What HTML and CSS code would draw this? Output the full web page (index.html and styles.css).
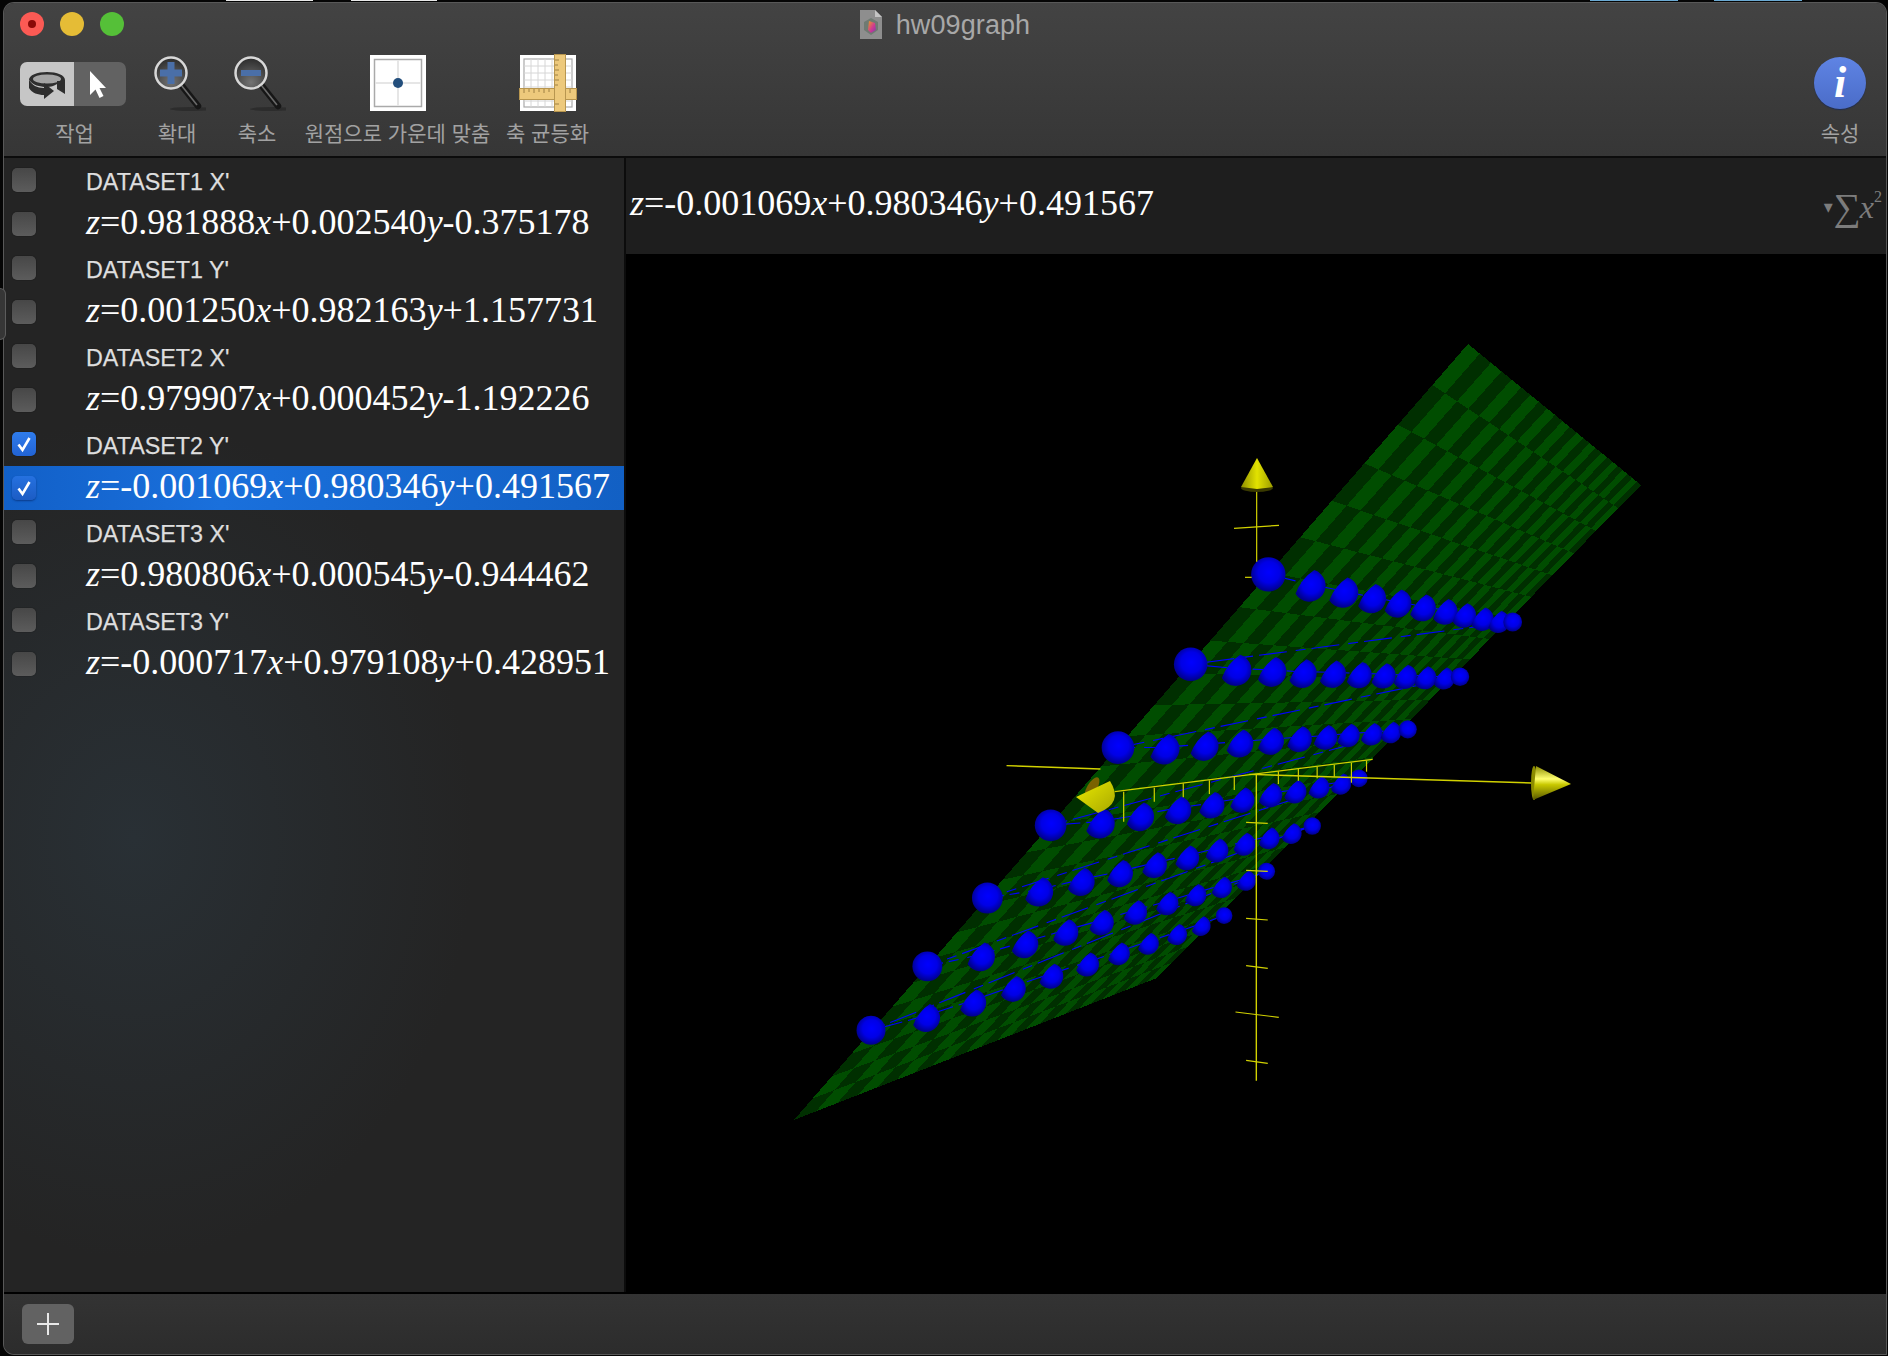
FILE: index.html
```html
<!DOCTYPE html>
<html lang="ko">
<head>
<meta charset="utf-8">
<title>hw09graph</title>
<link rel="stylesheet" href="styles.css">
</head>
<body>
<div class="behind behind-a"></div>
<div class="behind behind-b"></div>
<div class="behind behind-c"></div>
<div class="behind behind-d"></div>
<div class="tab-edge"></div>
<div class="window">
  <header class="toolbar">
    <div class="titlebar">
      <div class="lights">
        <span class="light red"><span class="red-dot"></span></span>
        <span class="light yellow"></span>
        <span class="light green"></span>
      </div>
      <div class="title">
        <svg class="doc-icon" viewBox="0 0 22 29" width="22" height="29">
          <defs>
            <linearGradient id="docfill" x1="0" y1="0" x2="1" y2="1">
              <stop offset="0" stop-color="#e8a020"/><stop offset=".55" stop-color="#d03a90"/><stop offset="1" stop-color="#7a3ab0"/>
            </linearGradient>
          </defs>
          <path d="M0 0H15L22 7V29H0Z" fill="#8e8e8e"/>
          <path d="M15 0L22 7H15Z" fill="#c4c4c4"/>
          <path d="M4 12L11 8L18 12V20L11 25L4 20Z" fill="#6f7a72"/>
          <path d="M9 11L15 13L16 20L11 23L8 20Z" fill="url(#docfill)"/>
        </svg>
        <span class="title-text">hw09graph</span>
      </div>
      <div></div>
    </div>
    <div class="tools">
      <div class="tool tool-action">
        <div class="tool-icon">
          <div class="segment">
            <div class="seg seg-on">
              <svg viewBox="0 0 54 44" width="54" height="44">
                <path d="M9 18C9 13 17 10 27 10S45 13 45 18V32L37 27V22C34 24 31 25 27 25 19 25 13 23 9 18Z" fill="#2e2e2e"/>
                <ellipse cx="27" cy="17" rx="14" ry="4.500" fill="#a4a4a4"/>
                <path d="M9 18V26C12 31 18 33 24 33V26C17 26 12 23 9 18Z" fill="#2e2e2e"/>
                <path d="M24 26V21L34 29L24 37V33Z" fill="#2e2e2e"/>
                <path d="M37 25L45 20V19H37Z" fill="#2e2e2e"/>
              </svg>
            </div>
            <div class="seg seg-off">
              <svg viewBox="0 0 52 44" width="52" height="44">
                <path d="M16 9V33L21.500 27.500L25.500 36L29.500 34L25.500 26H32Z" fill="#fff"/>
              </svg>
            </div>
          </div>
        </div>
        <span class="tool-label tool-label-action">작업</span>
      </div>
      <div class="tool tool-zoomin">
        <div class="tool-icon">
          <svg viewBox="0 0 58 58" width="58" height="58">
            <defs>
              <radialGradient id="lens" cx=".5" cy=".8" r=".8">
                <stop offset="0" stop-color="#747474"/><stop offset="1" stop-color="#2a2a2a"/>
              </radialGradient>
            </defs>
            <ellipse cx="44" cy="55" rx="22" ry="2" fill="#2c2c2c"/>
            <path d="M34 32L50 52" stroke="#161616" stroke-width="6.500" stroke-linecap="round"/>
            <path d="M33.500 31.500L49 51" stroke="#6a6a6a" stroke-width="1.600"/>
            <circle cx="23" cy="19" r="15.500" fill="url(#lens)" stroke="#d8d8d8" stroke-width="2.500"/>
            <path d="M12 19H34M23 8V30" stroke="#4a6fa8" stroke-width="7"/>
          </svg>
        </div>
        <span class="tool-label">확대</span>
      </div>
      <div class="tool tool-zoomout">
        <div class="tool-icon">
          <svg viewBox="0 0 58 58" width="58" height="58">
            <ellipse cx="44" cy="55" rx="22" ry="2" fill="#2c2c2c"/>
            <path d="M34 32L50 52" stroke="#161616" stroke-width="6.500" stroke-linecap="round"/>
            <path d="M33.500 31.500L49 51" stroke="#6a6a6a" stroke-width="1.600"/>
            <circle cx="23" cy="19" r="15.500" fill="url(#lens)" stroke="#d8d8d8" stroke-width="2.500"/>
            <path d="M13 19H33" stroke="#4a6fa8" stroke-width="6"/>
          </svg>
        </div>
        <span class="tool-label">축소</span>
      </div>
      <div class="tool tool-center">
        <div class="tool-icon">
          <svg viewBox="0 0 56 56" width="56" height="56">
            <rect width="56" height="56" fill="#fff"/>
            <rect x="4.500" y="4.500" width="47" height="47" fill="none" stroke="#aaa" stroke-width="1.500"/>
            <path d="M28 5V51M5 28H51" stroke="#e6e6e6" stroke-width="2"/>
            <circle cx="28" cy="28" r="5" fill="#234e7c"/>
          </svg>
        </div>
        <span class="tool-label">원점으로 가운데 맞춤</span>
      </div>
      <div class="tool tool-scale">
        <div class="tool-icon">
          <svg viewBox="0 0 58 58" width="58" height="58">
            <rect x="1" y="1" width="56" height="56" fill="#fff"/>
            <rect x="5" y="5" width="48" height="48" fill="none" stroke="#aaa" stroke-width="1.200"/>
            <path d="M12 5V53M19 5V53M26 5V53M33 5V53M5 12H53M5 19H53M5 26H53M5 33H53M5 47H53" stroke="#d6d6d6" stroke-width="1"/>
            <rect x="0.500" y="34.500" width="57" height="11" fill="#edc97c" stroke="#b8964f"/>
            <rect x="35.500" y="0.500" width="11" height="57" fill="#edc97c" stroke="#b8964f"/>
            <path d="M5 35V39M10 35V38M15 35V39M20 35V38M25 35V39M30 35V38M51 35V39M36 6H40M36 11H39M36 16H40M36 21H39M36 26H40M36 31H39M36 50H40" stroke="#8a6f35" stroke-width="0.800"/>
          </svg>
        </div>
        <span class="tool-label">축 균등화</span>
      </div>
      <div class="tool tool-info">
        <div class="tool-icon">
          <div class="info-badge"><span class="info-i">i</span></div>
        </div>
        <span class="tool-label">속성</span>
      </div>
    </div>
  </header>
  <div class="content">
    <aside class="sidebar">
      <div class="row"><span class="check"></span><span class="name">DATASET1 X'</span></div>
      <div class="row"><span class="check"></span><span class="eq"><i>z</i>=0.981888<i>x</i>+0.002540<i>y</i>-0.375178</span></div>
      <div class="row"><span class="check"></span><span class="name">DATASET1 Y'</span></div>
      <div class="row"><span class="check"></span><span class="eq"><i>z</i>=0.001250<i>x</i>+0.982163<i>y</i>+1.157731</span></div>
      <div class="row"><span class="check"></span><span class="name">DATASET2 X'</span></div>
      <div class="row"><span class="check"></span><span class="eq"><i>z</i>=0.979907<i>x</i>+0.000452<i>y</i>-1.192226</span></div>
      <div class="row"><span class="check check-on"><svg viewBox="0 0 24 24" width="24" height="24"><path d="M6.500 12.500L10.500 18L17.500 6" fill="none" stroke="#fff" stroke-width="2.600"/></svg></span><span class="name">DATASET2 Y'</span></div>
      <div class="row row-selected"><span class="check check-on check-sel"><svg viewBox="0 0 24 24" width="24" height="24"><path d="M6.500 12.500L10.500 18L17.500 6" fill="none" stroke="#fff" stroke-width="2.600"/></svg></span><span class="eq"><i>z</i>=-0.001069<i>x</i>+0.980346<i>y</i>+0.491567</span></div>
      <div class="row"><span class="check"></span><span class="name">DATASET3 X'</span></div>
      <div class="row"><span class="check"></span><span class="eq"><i>z</i>=0.980806<i>x</i>+0.000545<i>y</i>-0.944462</span></div>
      <div class="row"><span class="check"></span><span class="name">DATASET3 Y'</span></div>
      <div class="row"><span class="check"></span><span class="eq"><i>z</i>=-0.000717<i>x</i>+0.979108<i>y</i>+0.428951</span></div>
    </aside>
    <main class="main">
      <div class="eqbar">
        <span class="eqbar-text"><i>z</i>=-0.001069<i>x</i>+0.980346<i>y</i>+0.491567</span>
        <span class="sigma"><span class="sigma-arrow">▾</span><span class="sigma-sum">∑</span><i class="sigma-x">x</i><sup class="sigma-sup">2</sup></span>
      </div>
      <div class="plot">
        <svg id="plot3d" class="plot-svg" viewBox="626 254 1260 1038" xmlns="http://www.w3.org/2000/svg">
          <defs>
            <radialGradient id="ball" cx=".52" cy=".44" r=".56">
              <stop offset="0" stop-color="#0000ff"/><stop offset=".55" stop-color="#0000e6"/><stop offset="1" stop-color="#000088"/>
            </radialGradient>
            <linearGradient id="coneUp" x1="0" y1="0" x2="1" y2="0">
              <stop offset="0" stop-color="#8f8f00"/><stop offset=".5" stop-color="#e2e200"/><stop offset="1" stop-color="#9c9c00"/>
            </linearGradient>
            <linearGradient id="coneRight" x1="0" y1="0" x2="0" y2="1">
              <stop offset="0" stop-color="#8c8c00"/><stop offset=".38" stop-color="#ffff70"/><stop offset=".55" stop-color="#c8c800"/><stop offset="1" stop-color="#555500"/>
            </linearGradient>
            <linearGradient id="coneLeft" x1="0" y1="0" x2="1" y2="1">
              <stop offset="0" stop-color="#eaea00"/><stop offset="1" stop-color="#a8a800"/>
            </linearGradient>
          </defs>
          <g id="plane" shape-rendering="crispEdges"></g>
          <g id="paths"></g>
          <g id="spheres"></g>
          <g id="axes"></g>
        </svg>
      </div>
    </main>
  </div>
  <footer class="bottombar">
    <button class="add-btn" type="button"><svg viewBox="0 0 24 24" width="24" height="24"><path d="M12 1V23M1 12H23" stroke="#e8e8e8" stroke-width="2"/></svg></button>
  </footer>
</div>
<script src="script.js"></script>
</body>
</html>
```
FILE: styles.css
```css
* { box-sizing: border-box; }
html, body { margin: 0; height: 100%; background: #050505; overflow: hidden; }
body { position: relative; padding: 3px 2px 2px 4px; font-family: "Liberation Sans", "Noto Sans CJK KR", sans-serif; }

.behind { position: absolute; top: 0; height: 1px; }
.behind-a { left: 226px; width: 87px; background: #e8e8e8; }
.behind-b { left: 351px; width: 86px; background: #e8e8e8; }
.behind-c { left: 1590px; width: 88px; background: #6aa9d2; }
.behind-d { left: 1714px; width: 88px; background: #6aa9d2; }
.tab-edge { position: absolute; z-index: 2; left: 0; top: 288px; width: 6px; height: 52px; background: #363636; border: 1px solid #5c5c5c; border-left: 0; border-radius: 0 6px 6px 0; }

.window { height: 100%; display: flex; flex-direction: column; border-radius: 10px 10px 0 10px; overflow: hidden; box-shadow: 0 0 0 1px #585858; background: #242424; }

.toolbar { height: 155px; flex: none; background: linear-gradient(#434343, #363636); border-bottom: 2px solid #0c0c0c; }
.titlebar { height: 42px; margin-bottom: 9px; display: grid; grid-template-columns: 1fr auto 1fr; align-items: center; }
.lights { display: flex; gap: 16px; padding-left: 16px; }
.light { width: 24px; height: 24px; border-radius: 50%; display: flex; align-items: center; justify-content: center; }
.red { background: #fb5a54; }
.red-dot { width: 8px; height: 8px; border-radius: 50%; background: #8a0a08; }
.yellow { background: #e5bc36; }
.green { background: #55c038; }
.title { display: flex; align-items: center; gap: 14px; }
.doc-icon { display: block; }
.title-text { font-size: 27px; letter-spacing: 0.100px; color: #a8a8a8; line-height: 30px; position: relative; top: 1px; }

.tools { display: flex; gap: 18px; padding: 0 17px 0 16px; }
.tool { display: flex; flex-direction: column; align-items: center; white-space: nowrap; }
.tool-icon { height: 58px; display: flex; align-items: center; justify-content: center; }
.tool-label { margin-top: 5px; font-family: "Noto Sans CJK KR", "Liberation Sans", sans-serif; font-size: 21px; line-height: 30px; color: #a2a2a2; }
.tool-label-action { padding-left: 3px; }
.tool-action { width: 106px; }
.tool-zoomin { width: 66px; }
.tool-zoomout { width: 58px; }
.tool-center { width: 187px; }
.tool-scale { width: 77px; }
.tool-info { margin-left: auto; width: 58px; }

.segment { display: flex; width: 106px; height: 44px; margin-top: 2px; border-radius: 7px; overflow: hidden; }
.seg { height: 44px; display: block; }
.seg svg { display: block; }
.seg-on { width: 54px; background: #c6c6c6; }
.seg-off { width: 52px; background: #626262; }

.info-badge { width: 52px; height: 52px; border-radius: 50%; background: linear-gradient(#5f84e4, #4a6cc8); box-shadow: 0 1px 1px #1d2c55; display: flex; align-items: center; justify-content: center; }
.info-i { font-family: "Liberation Serif", serif; font-style: italic; font-weight: 700; font-size: 44px; line-height: 52px; color: #fff; }

.content { flex: 1; min-height: 0; display: flex; }
.sidebar { width: 620px; flex: none; background: radial-gradient(ellipse 340px 420px at 130px 680px, #293035 0%, rgba(41, 48, 53, 0) 100%), #242424; }
.row { height: 44px; display: flex; align-items: center; padding-left: 8px; }
.row-selected { background: linear-gradient(90deg, #1260c8, #1a70dc 35%, #1260c4); }
.check { width: 24px; height: 24px; flex: none; margin-right: 50px; border-radius: 5px; background: linear-gradient(#474747, #5c5c5c); box-shadow: 0 0 1px #000; }
.check svg { display: block; }
.check-on { background: linear-gradient(#2f7cec, #2263d4); }
.check-sel { background: linear-gradient(#2571e0, #1c5cc4); box-shadow: 0 1px 2px #0a3a88; }
.name { font-size: 23.300px; color: #dedede; line-height: 28px; padding-top: 3px; -webkit-text-stroke: 0.25px #dedede; }
.eq { font-family: "Liberation Serif", serif; font-size: 36px; line-height: 40px; color: #fff; white-space: nowrap; padding-bottom: 5px; }

.main { flex: 1; min-width: 0; display: flex; flex-direction: column; border-left: 2px solid #0c0c0c; }
.eqbar { height: 96px; flex: none; background: #1e1e1e; display: flex; align-items: center; justify-content: space-between; padding: 0 4px 6px 4px; color: #fff; }
.eqbar-text { font-family: "Liberation Serif", serif; font-size: 36px; line-height: 40px; }
.sigma { display: flex; align-items: flex-start; font-family: "Liberation Serif", serif; color: #7c7c7c; font-size: 32px; line-height: 36px; padding-top: 8px; }
.sigma-arrow { font-family: "DejaVu Sans", sans-serif; font-size: 18px; line-height: 36px; width: 10px; }
.sigma-sum { font-size: 38px; }
.sigma-x { margin-left: -1px; }
.sigma-sup { font-size: 16px; line-height: 18px; margin-top: -1px; }
.plot { flex: 1; min-height: 0; background: #000; }
.plot-svg { display: block; width: 100%; height: 100%; }

.bottombar { height: 62px; flex: none; border-top: 2px solid #000; background: linear-gradient(#333, #2c2c2c); padding: 10px 0 0 18px; }
.add-btn { width: 52px; height: 40px; padding: 0; border: 0; border-radius: 6px; background: #626262; display: flex; align-items: center; justify-content: center; }
.add-btn svg { display: block; }
```
FILE: script.js
```js
(function () {
  var NS = "http://www.w3.org/2000/svg";
  function el(parent, name, attrs) {
    var n = document.createElementNS(NS, name);
    for (var k in attrs) n.setAttribute(k, attrs[k]);
    parent.appendChild(n);
    return n;
  }
  function Z3(x, y) { return [1150 + x / 3, 330 + y / 3]; }
  function Z4(x, y) { return [780 + x / 2.45, 720 + y / 3]; }

  /* Checkered plane: a homography from the unit square to the quad. */
  var A = [1468, 344], B = [1641, 485], C = [1157, 978], D = [794, 1120];
  function homography(p0, p1, p2, p3) {
    var dx1 = p1[0] - p2[0], dx2 = p3[0] - p2[0], sx = p0[0] - p1[0] + p2[0] - p3[0];
    var dy1 = p1[1] - p2[1], dy2 = p3[1] - p2[1], sy = p0[1] - p1[1] + p2[1] - p3[1];
    var den = dx1 * dy2 - dx2 * dy1;
    var g = (sx * dy2 - dx2 * sy) / den, h = (dx1 * sy - sx * dy1) / den;
    var a = p1[0] - p0[0] + g * p1[0], b = p3[0] - p0[0] + h * p3[0], c = p0[0];
    var d = p1[1] - p0[1] + g * p1[1], e = p3[1] - p0[1] + h * p3[1], f = p0[1];
    return function (u, v) {
      var w = g * u + h * v + 1;
      return [(a * u + b * v + c) / w, (d * u + e * v + f) / w];
    };
  }
  var map = homography(A, B, C, D);
  var plane = document.getElementById("plane");
  var NU = 24, NV = 26;
  for (var i = 0; i < NU; i++) {
    for (var j = 0; j < NV; j++) {
      var q = [map(i / NU, j / NV), map((i + 1) / NU, j / NV), map((i + 1) / NU, (j + 1) / NV), map(i / NU, (j + 1) / NV)];
      el(plane, "polygon", {
        points: q.map(function (p) { return p[0].toFixed(1) + "," + p[1].toFixed(1); }).join(" "),
        fill: (i + j) % 2 ? "#002f00" : "#004d00"
      });
    }
  }

  /* Data rows: 11 points each, big leading marker, the rest cut by the plane. */
  var rows = [
    [Z3, [[355,733],[475,762],[575,782],[660,800],[738,815],[813,828],[880,840],[937,851],[992,862],[1041,870],[1088,876]]],
    [Z3, [[122,1003],[253,1015],[360,1020],[453,1025],[543,1027],[622,1030],[695,1032],[760,1035],[820,1038],[877,1040],[930,1040]]],
    [Z4, [[828,83],[938,82],[1035,73],[1122,65],[1198,58],[1268,52],[1332,47],[1388,41],[1445,37],[1492,32],[1538,28]]],
    [Z4, [[663,316],[780,305],[878,285],[970,265],[1053,250],[1128,235],[1197,220],[1258,210],[1316,197],[1370,187],[1418,175]]],
    [Z4, [[508,534],[630,510],[733,480],[828,455],[913,430],[993,408],[1066,386],[1133,367],[1194,350],[1249,335],[1304,318]]],
    [Z4, [[361,739],[488,705],[595,667],[695,632],[783,602],[866,572],[944,545],[1014,520],[1078,497],[1138,477],[1192,454]]],
    [Z4, [[223,931],[354,888],[468,843],[567,801],[660,763],[749,728],[826,696],[898,666],[968,638],[1028,613],[1088,587]]]
  ];
  var pts = rows.map(function (r) {
    return r[1].map(function (p) { return r[0](p[0], p[1]); });
  });

  var paths = document.getElementById("paths");
  var all = [];
  pts.forEach(function (r) { all = all.concat(r); });
  el(paths, "polyline", {
    points: all.map(function (p) { return p[0].toFixed(1) + "," + p[1].toFixed(1); }).join(" "),
    fill: "none", stroke: "#0000ff", "stroke-width": "1.100", "stroke-dasharray": "28 6 10 9"
  });

  /* Markers past the first are half sunk in the plane: a disc whose upper-left
     side is trimmed by a shallow arc, leaving a tip toward the upper right. */
  var spheres = document.getElementById("spheres");
  var dirx = 0.62, diry = -0.78, nx = -0.78, ny = -0.62;
  pts.forEach(function (r, ri) {
    var r0 = 16.2 - 0.3 * ri, rl = 10.8 - 0.2 * ri;
    r.forEach(function (p, i) {
      if (i === 0) {
        el(spheres, "circle", { cx: p[0], cy: p[1], r: 17.2 - 0.45 * ri, fill: "url(#ball)" });
        return;
      }
      var rad = r0 + (rl - r0) * (i - 1) / 9;
      if (i === 10) {
        el(spheres, "circle", { cx: p[0], cy: p[1], r: rad * 0.87, fill: "url(#ball)" });
        return;
      }
      var cx = p[0] + 1, cy = p[1] + 1.5, off = 0.35 * rad, half = Math.sqrt(1 - 0.1225) * rad;
      var x1 = cx + nx * off - dirx * half, y1 = cy + ny * off - diry * half;
      var x2 = cx + nx * off + dirx * half, y2 = cy + ny * off + diry * half;
      var R = rad.toFixed(1), R2 = (rad * 3).toFixed(1);
      el(spheres, "path", {
        d: "M" + x2.toFixed(1) + " " + y2.toFixed(1) + "A" + R + " " + R + " 0 1 1 " + x1.toFixed(1) + " " + y1.toFixed(1) +
           "A" + R2 + " " + R2 + " 0 0 1 " + x2.toFixed(1) + " " + y2.toFixed(1) + "Z",
        fill: "url(#ball)"
      });
    });
  });

  /* Axes */
  var axes = document.getElementById("axes");
  function line(a, b, w) {
    el(axes, "line", { x1: a[0], y1: a[1], x2: b[0], y2: b[1], stroke: "#d2d200", "stroke-width": w || 1.2 });
  }
  line(Z3(320, 475), Z3(320, 695));
  line(Z3(252, 595), Z3(387, 586));
  line(Z3(285, 742), Z3(305, 742));
  line(Z4(1167, 165), Z4(1167, 1082), 1.4);
  [[1142,307,1195,310],[1142,451,1195,454],[1142,595,1195,600],[1142,737,1195,745],[1116,876,1222,892],[1142,1021,1195,1030]]
    .forEach(function (t) { line(Z4(t[0], t[1]), Z4(t[2], t[3])); });
  line(Z4(555, 137), Z4(785, 147), 1.4);
  line(Z4(1150, 163), [1532, 783], 1.4);
  line(Z4(820, 215), Z4(1452, 118), 1.2);
  [[842,215,305],[917,203,245],[988,190,232],[1052,181,222],[1113,170,210],[1221,154,192],[1270,147,182],[1316,140,175],[1358,134,170],[1400,128,188],[1437,122,155]]
    .forEach(function (t) { line(Z4(t[0], t[1]), Z4(t[0], t[2])); });

  function poly(points, fill) {
    el(axes, "polygon", { points: points.map(function (p) { return p.join(","); }).join(" "), fill: fill });
  }
  /* up cone */
  el(axes, "ellipse", { cx: 1257, cy: 488, rx: 16, ry: 4, fill: "#3a3a00" });
  poly([[1257, 458], [1241, 487], [1257, 489], [1273, 487]], "url(#coneUp)");
  /* right cone */
  el(axes, "ellipse", { cx: 1534, cy: 783, rx: 3, ry: 17, fill: "#8c8c00" });
  poly([[1571, 784], [1536, 766], [1533, 800]], "url(#coneRight)");
  /* left cone */
  el(axes, "ellipse", { cx: 1092, cy: 788, rx: 5, ry: 12, transform: "rotate(30 1092 788)", fill: "#7a6200" });
  el(axes, "path", { d: "M1076 797L1110 781Q1124 803 1098 813Z", fill: "url(#coneLeft)" });
})();
```
